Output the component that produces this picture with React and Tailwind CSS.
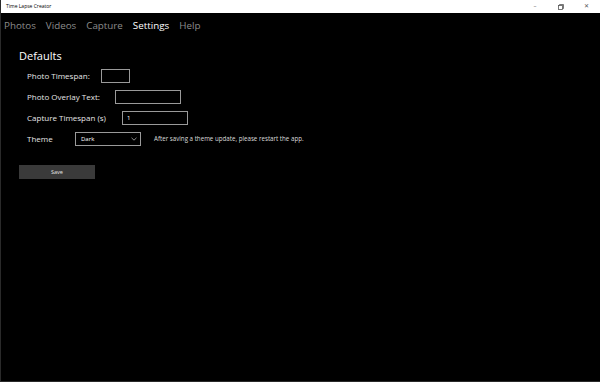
const NAV = [
  { label: 'Photos' },
  { label: 'Videos' },
  { label: 'Capture' },
  { label: 'Settings', active: true },
  { label: 'Help' },
];

function Field({ label, labelWidth, width, value }) {
  return (
    <div className="flex items-center h-[14px]">
      <span className={`text-[8px] text-[#e6e6e6] leading-none ${labelWidth}`}>{label}</span>
      <div
        className={`h-[14px] border border-[#9a9a9a] flex items-center pl-[4px] text-[6px] text-white ${width}`}
      >
        {value}
      </div>
    </div>
  );
}

export default function App() {
  return (
    <div
      className="w-[600px] h-[382px] bg-black flex flex-col overflow-hidden border-l border-b border-[#2a2a2a]"
      style={{ fontFamily: '"Open Sans", "Noto Sans", sans-serif' }}
    >
      {/* Title bar */}
      <div className="h-[13px] bg-white flex items-center shrink-0">
        <span className="pl-[5px] text-[5px] text-black leading-none">Time Lapse Creator</span>
        <div className="ml-auto flex items-center text-[#555] text-[6px] leading-none">
          <span className="w-[26px] text-center">–</span>
          <span className="w-[26px] text-center">
            <svg width="6" height="6" viewBox="0 0 6 6" className="inline">
              <rect x="0.5" y="1.5" width="4" height="4" fill="none" stroke="#555" strokeWidth="0.8" />
              <path d="M1.5 1.5V0.5H5.5V4.5H4.5" fill="none" stroke="#555" strokeWidth="0.8" />
            </svg>
          </span>
          <span className="w-[26px] text-center pr-[2px]">✕</span>
        </div>
      </div>

      {/* Nav */}
      <nav className="flex items-center gap-[10px] pl-[3px] h-[25px]">
        {NAV.map(({ label, active }) => (
          <span
            key={label}
            className={`text-[9.8px] leading-none ${active ? 'text-white' : 'text-[#8c8c8c]'}`}
          >
            {label}
          </span>
        ))}
      </nav>

      {/* Content */}
      <div className="pl-[18px] pt-[12px]">
        <div className="text-[11px] text-white leading-none">Defaults</div>

        <div className="pl-[8px] mt-[8px] flex flex-col gap-[7px]">
          <Field label="Photo Timespan:" labelWidth="w-[74px]" width="w-[29px]" />
          <Field label="Photo Overlay Text:" labelWidth="w-[88px]" width="w-[66px]" />
          <Field label="Capture Timespan (s)" labelWidth="w-[95px]" width="w-[66px]" value="1" />
          <div className="flex items-center h-[14px]">
            <span className="text-[8px] text-[#e6e6e6] leading-none w-[48px]">Theme</span>
            <div className="w-[66px] h-[14px] border border-[#9a9a9a] flex items-center pl-[5px] pr-[3px] text-[6px] text-white">
              Dark
              <svg width="6" height="4" viewBox="0 0 6 4" className="ml-auto">
                <path d="M0.5 0.8L3 3.2L5.5 0.8" fill="none" stroke="#ccc" strokeWidth="0.7" />
              </svg>
            </div>
            <span className="ml-[13px] text-[6.2px] text-[#dcdcdc] leading-none">
              After saving a theme update, please restart the app.
            </span>
          </div>
        </div>

        <button className="mt-[19px] w-[76px] h-[14px] bg-[#3a3a3a] text-[5.5px] text-[#e6e6e6] flex items-center justify-center">
          Save
        </button>
      </div>
    </div>
  );
}
